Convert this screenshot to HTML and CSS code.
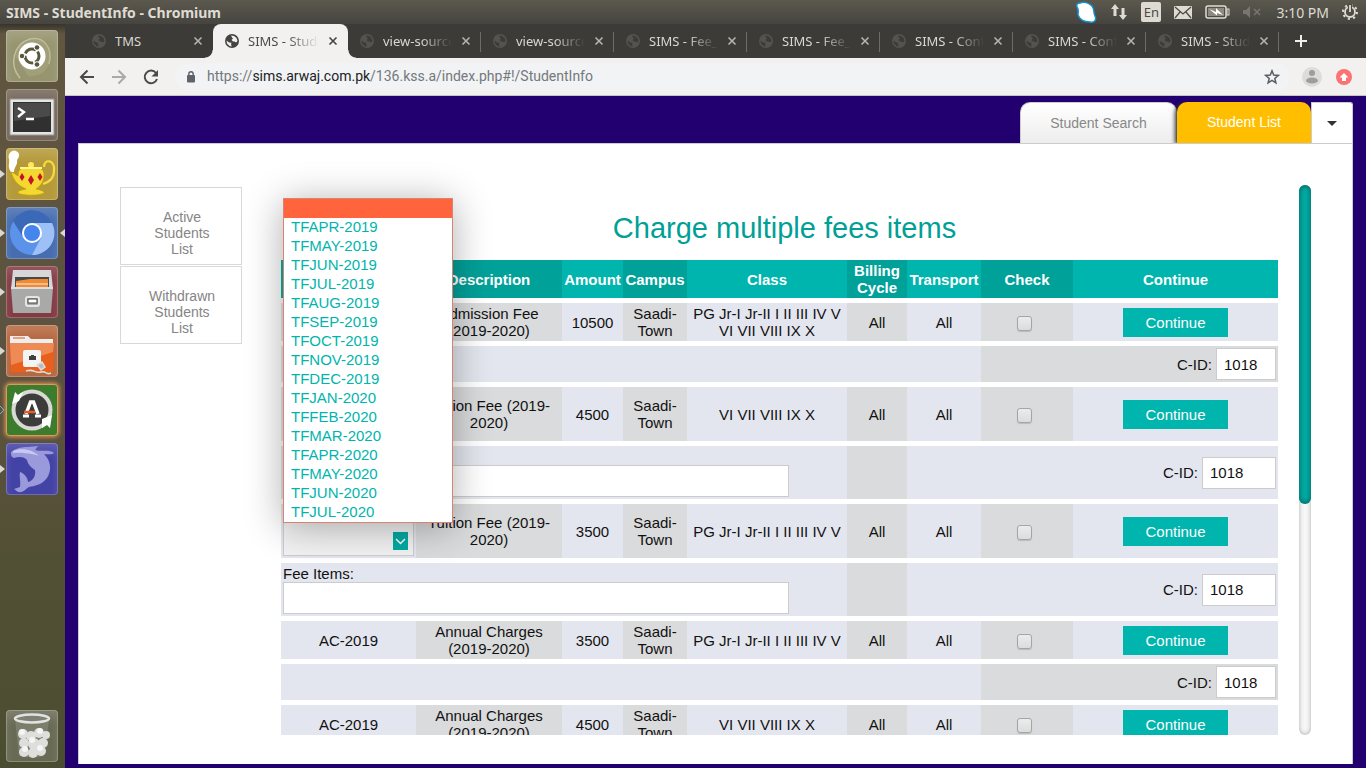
FILE: index.html
```html
<!DOCTYPE html>
<html lang="en">
<head>
<meta charset="utf-8">
<title>SIMS - StudentInfo</title>
<link rel="stylesheet" href="styles.css">
</head>
<body>
<svg width="0" height="0" class="defs" aria-hidden="true">
  <symbol id="globe" viewBox="0 0 14 14"><circle cx="7" cy="7" r="7" fill="currentColor"/><path d="M1.5 6.5 4 8.5 6.500 8.800 6 10.500 6.800 12.500 4.500 12 2 9.500zM6 1.500 9 2 11.500 4 12.500 7 11 8.500 9.500 7.500 8 7.500 6.500 6 8 4.500 7 3.500z" fill="var(--cut)"/></symbol>
  <symbol id="cross" viewBox="0 0 10 10"><path d="M1.500 1.500 8.500 8.500M8.500 1.500 1.500 8.500" stroke="currentColor" stroke-width="1.600" fill="none"/></symbol>
  <symbol id="run" viewBox="0 0 5 8"><path d="M0 0 5 4 0 8z" fill="#d8d8d4"/></symbol>
</svg>

<header class="system-bar">
  <span class="window-title">SIMS - StudentInfo - Chromium</span>
  <div class="indicators">
    <svg width="22" height="23" viewBox="0 0 22 23"><path d="M5 2C9 0 14 2 17 5 20 9 18 11 20 15 22 19 19 22 15 21 10 21 5 19 3 14 3 11 4 9 2 6 1 3 3 2 5 2z" fill="#fff" stroke="#1191cf" stroke-width="1.500"/></svg>
    <svg width="18" height="18" viewBox="0 0 18 18"><path d="M5 1 9 6H6.500V13H3.500V6H1zM13 17 9 12h2.500V5h3v7H17z" fill="#dfdbd2"/></svg>
    <span class="lang">En</span>
    <svg width="18" height="13" viewBox="0 0 18 13"><rect width="18" height="13" rx="1" fill="#dfdbd2"/><path d="M1 1 9 8 17 1M1 12 6 6M17 12 12 6" stroke="#4b4a45" stroke-width="1.300" fill="none"/></svg>
    <svg width="25" height="14" viewBox="0 0 25 14"><rect x="1" y="1" width="20" height="12" rx="2" fill="none" stroke="#dfdbd2" stroke-width="1.500"/><rect x="3" y="3" width="16" height="8" fill="#8d8a82"/><rect x="22" y="4" width="2" height="6" fill="none" stroke="#dfdbd2"/><path d="M4 4 11 7V3L18 10 12 8V10.500z" fill="#fff"/></svg>
    <svg width="18" height="12" viewBox="0 0 18 12"><path d="M0 4h3l4-4v12L3 8H0z" fill="#777670"/><path d="M11 3l6 6M17 3l-6 6" stroke="#777670" stroke-width="1.500"/></svg>
    <span class="clock">3:10 PM</span>
    <svg width="16" height="16" viewBox="0 0 16 16" fill="none" stroke="#dfdbd2"><circle cx="8" cy="8" r="5" stroke-width="1.800"/><circle cx="8" cy="8" r="7" stroke-width="2" stroke-dasharray="2.200 3.298"/><path d="M8 0v8" stroke="#4b4a45" stroke-width="4"/><path d="M8 1v7" stroke-width="1.800"/></svg>
  </div>
</header>

<div class="desktop">
  <nav class="launcher" aria-label="Launcher">
    <button class="app dash" aria-label="Dash"><svg viewBox="0 0 52 52"><path d="M14 48C2 34 8 14 24 9 38 6 47 18 43 34" fill="none" stroke="#c1bf9d" stroke-width="1.500"/><path d="M9 26C12 9 34 2 44 18 48 34 38 48 22 46" fill="#b0ae88" opacity=".4"/><circle cx="26" cy="26" r="13.500" fill="#fff"/><circle cx="26" cy="26" r="7" fill="none" stroke="#5a583c" stroke-width="3" stroke-dasharray="12.600 2.060" stroke-dashoffset="5"/><g fill="#5a583c" stroke="#fff"><circle cx="16" cy="26" r="2.800"/><circle cx="31" cy="17.500" r="2.800"/><circle cx="31" cy="34.500" r="2.800"/></g></svg></button>
    <button class="app term" aria-label="Terminal"><svg viewBox="0 0 52 52"><rect x="4" y="10" width="44" height="36" fill="#e4e4e2" stroke="#999"/><rect x="7" y="13" width="38" height="30" fill="#303030"/><path d="M8 14h36v13L8 32z" fill="#4a4a4a"/><path d="M12 19l6 4-6 5M20 30h8" fill="none" stroke="#fff" stroke-width="2.400"/></svg></button>
    <button class="app lamp" aria-label="Teapot"><svg class="run" viewBox="0 0 5 8"><use href="#run"/></svg><svg viewBox="0 0 52 52"><path d="M5 24C1 18 4 16 3 11 1 5 7 1 10 3 15 5 13 10 11 12 12 17 8 19 8 24z" fill="#fff"/><path d="M38 19C38 10 49 12 48 22 48 31 43 34 37 36" fill="none" stroke="#f6dc3c" stroke-width="2.200"/><path d="M5 24C9 25 10 27 12 28 12 19 18 19 25 19 33 19 38 20 38 27 38 35 33 39 30 41 36 42 39 44 38 45 34 48 16 48 12 45 11 43 15 42 20 41 13 38 8 34 5 24z" fill="#f3d831" stroke="#c59f00" stroke-width=".8"/><circle cx="25" cy="17" r="3" fill="#ffe85a"/><path d="M14 20h22" stroke="#fff58a" stroke-width="2"/><path d="M16 25l2.500 4-2.500 4-2.500-4zM25 27l3 5-3 5-3-5zM34 25l2.500 4-2.500 4-2.500-4z" fill="#c8102a"/></svg></button>
    <button class="app chromium" aria-label="Chromium"><svg class="run" viewBox="0 0 5 8"><use href="#run"/></svg><svg class="focus" viewBox="0 0 5 8"><use href="#run"/></svg><svg viewBox="0 0 52 52"><circle cx="26" cy="26" r="22" fill="#5c93ea"/><path d="M26 16h20A22 22 0 0 1 26 48L35 31z" fill="#9dc0f7"/><path d="M7 14A22 22 0 0 1 46 16H26a10 10 0 0 0-9 14z" fill="#3b69b8"/><circle cx="26" cy="26" r="10" fill="#fff"/><circle cx="26" cy="26" r="8" fill="#4585ee"/></svg></button>
    <button class="app files" aria-label="Files"><svg class="run" viewBox="0 0 5 8"><use href="#run"/></svg><svg viewBox="0 0 52 52"><path d="M7 4h38l2 19H5z" fill="#d7d7d7"/><path d="M9 11h34v12H9z" fill="#484848"/><path d="M10 15l14-2h18v10H10z" fill="#f08a35"/><path d="M10 18h32" stroke="#fff0d9"/><path d="M5 22h42l-2 25H7z" fill="#a9a9a7"/><path d="M5 22h42" stroke="#ddd" stroke-width="2"/><rect x="20" y="31" width="13" height="9" rx="2" fill="#aaa" stroke="#e5e5e5" stroke-width="2"/><rect x="22" y="33" width="9" height="4" fill="#fff" stroke="#444"/></svg></button>
    <button class="app share" aria-label="Network folder"><svg class="run" viewBox="0 0 5 8"><use href="#run"/></svg><svg viewBox="0 0 52 52"><path d="M4 11h18l3 3h22v8H4z" fill="#eee"/><path d="M7 13h12" stroke="#eaa27c" stroke-width="2"/><path d="M4 18h44l-1 29H5z" fill="#e9601d"/><path d="M4 18h44l-1 9L5 40z" fill="#f08a54"/><rect x="17" y="25" width="18" height="17" rx="2" fill="#f4f4f2"/><path d="M23 35v-4h2v-1h3v1h2v4z" fill="#3f423c"/><path d="M31 40l5-3 3 5-4 3zM20 46c8-3 9 3 15 1s4 4 10 1" fill="#bbb" stroke="#ddd" stroke-width="1.500"/></svg></button>
    <button class="app updater" aria-label="Software Updater"><svg class="run" viewBox="0 0 5 8"><path d="M0 0 4 4 0 8" fill="none" stroke="#65b8dc"/></svg><svg viewBox="0 0 52 52"><circle cx="26" cy="26" r="18.500" fill="#3c3c3a" stroke="#d8d8d5" stroke-width="4"/><path d="M6 20 9 8l3 3 5-3-4 9zM46 31l-2 13-3-3-5 3 0-9z" fill="#fff"/><path d="M20 30 24.500 18h3L32 30" fill="none" stroke="#fff" stroke-width="3.500"/><path d="M17 32h6M29 32h6" stroke="#fff" stroke-width="3"/><path d="M18 28h11" stroke="#f05a22" stroke-width="2.500"/></svg></button>
    <button class="app dolphin" aria-label="MySQL Workbench"><svg class="run" viewBox="0 0 5 8"><use href="#run"/></svg><svg viewBox="0 0 52 52"><path d="M5 9C10 5 16 4 22 4L32 3 29 7C36 9 44 6 48 10 46 12 42 11 38 11 45 18 46 27 41 35 36 42 28 43 23 44 19 46 18 50 12 49L8 46 14 44C15 38 13 34 14 29 18 30 22 35 22 39 27 38 30 33 29 27 26 25 22 22 21 17 17 13 12 14 8 15 5 14 5 12 5 9z" fill="#9a99dc"/><path d="M7 8C16 4 27 7 33 13 30 12 20 9 7 10z" fill="#c9c9f2"/></svg></button>
    <button class="app trash" aria-label="Trash"><svg viewBox="0 0 52 52"><path d="M9 10 13 46q13 3 25 0L43 10z" fill="#8d9180" opacity=".5"/><g fill="#dededc"><circle cx="17" cy="24" r="5"/><circle cx="25" cy="26" r="5"/><circle cx="33" cy="23" r="5"/><circle cx="40" cy="25" r="4"/><circle cx="18" cy="33" r="5"/><circle cx="28" cy="34" r="6"/><circle cx="37" cy="33" r="5"/><circle cx="18" cy="42" r="5"/><circle cx="27" cy="43" r="5"/><circle cx="35" cy="41" r="5"/></g><g fill="#f5f5f4"><circle cx="16" cy="22" r="3"/><circle cx="26" cy="30" r="3"/><circle cx="34" cy="21" r="3"/><circle cx="19" cy="39" r="3"/><circle cx="34" cy="38" r="3"/></g><ellipse cx="26" cy="8.500" rx="17" ry="4" fill="#7e8175" stroke="#e2e2e0" stroke-width="2.500"/></svg></button>
  </nav>

  <div class="browser">
    <div class="tab-strip">
      <div class="tab"><svg class="fav"><use href="#globe"/></svg><span>TMS</span><svg class="close"><use href="#cross"/></svg></div>
      <div class="tab active"><svg class="fav"><use href="#globe"/></svg><span>SIMS - StudentInfo</span><svg class="close"><use href="#cross"/></svg></div>
      <div class="tab line"><svg class="fav"><use href="#globe"/></svg><span>view-source:https</span><svg class="close"><use href="#cross"/></svg></div>
      <div class="tab line"><svg class="fav"><use href="#globe"/></svg><span>view-source:https</span><svg class="close"><use href="#cross"/></svg></div>
      <div class="tab line"><svg class="fav"><use href="#globe"/></svg><span>SIMS - Fee_Items</span><svg class="close"><use href="#cross"/></svg></div>
      <div class="tab line"><svg class="fav"><use href="#globe"/></svg><span>SIMS - Fee_Items</span><svg class="close"><use href="#cross"/></svg></div>
      <div class="tab line"><svg class="fav"><use href="#globe"/></svg><span>SIMS - Configure</span><svg class="close"><use href="#cross"/></svg></div>
      <div class="tab line"><svg class="fav"><use href="#globe"/></svg><span>SIMS - Configure</span><svg class="close"><use href="#cross"/></svg></div>
      <div class="tab line"><svg class="fav"><use href="#globe"/></svg><span>SIMS - StudentInfo</span><svg class="close"><use href="#cross"/></svg></div>
      <button class="new-tab" aria-label="New tab"><svg width="12" height="12" viewBox="0 0 12 12"><path d="M6 0v12M0 6h12" stroke="#eeeeea" stroke-width="2"/></svg></button>
    </div>

    <div class="toolbar">
      <button aria-label="Back"><svg width="16" height="16" viewBox="0 0 16 16"><path d="M15 8H2M8.500 1.500 2 8l6.500 6.500" fill="none" stroke="#4a4a4a" stroke-width="2"/></svg></button>
      <button aria-label="Forward"><svg width="16" height="16" viewBox="0 0 16 16"><path d="M1 8h13M7.500 1.500 14 8l-6.500 6.500" fill="none" stroke="#aaa9a7" stroke-width="2"/></svg></button>
      <button aria-label="Reload"><svg width="16" height="16" viewBox="0 0 16 16"><path d="M13 4A6.300 6.300 0 1 0 14 10" fill="none" stroke="#4a4a4a" stroke-width="2"/><path d="M15 1v6.500H8.500z" fill="#4a4a4a"/></svg></button>
      <div class="address">
        <svg width="10" height="12" viewBox="0 0 10 12"><rect x="1" y="4" width="8" height="7.500" rx="1" fill="#5f6368"/><path d="M2.800 5V3a2.200 2.200 0 0 1 4.400 0v2" fill="none" stroke="#5f6368" stroke-width="1.400"/></svg>
        <span class="url">https://<b>sims.arwaj.com.pk</b>/136.kss.a/index.php#!/StudentInfo</span>
        <svg width="16" height="16" viewBox="0 0 16 16"><path d="M8 1.800l1.700 4.200 4.600.4-3.500 3 1.100 4.400L8 11.400l-3.900 2.400 1.100-4.400-3.500-3 4.600-.4z" fill="none" stroke="#5a5e64" stroke-width="1.500"/></svg>
      </div>
      <div class="extras">
        <svg width="20" height="20" viewBox="0 0 20 20"><circle cx="10" cy="10" r="10" fill="#dcdcdc"/><circle cx="10" cy="6" r="3" fill="#9d9d9d"/><ellipse cx="10" cy="13.500" rx="6" ry="3" fill="#9d9d9d"/></svg>
        <svg width="16" height="16" viewBox="0 0 16 16"><circle cx="8" cy="8" r="8" fill="#fb7275"/><path d="M8 4 12.500 8.500H10V12H6V8.500H3.500z" fill="#fff"/></svg>
      </div>
    </div>

    <main class="page">
      <nav class="page-tabs">
        <button class="page-tab search">Student Search</button>
        <button class="page-tab list">Student List</button>
        <button class="page-tab more" aria-label="More"><svg width="10" height="5" viewBox="0 0 10 5"><path d="M0 0h10L5 5z" fill="#333"/></svg></button>
      </nav>
      <section class="panel">
        <aside class="side">
          <a href="#active">Active<br>Students<br>List</a>
          <a href="#withdrawn">Withdrawn<br>Students<br>List</a>
        </aside>
        <div class="viewport">
          <h1>Charge multiple fees items</h1>
          <table class="fees">
            <colgroup><col class="c-item"><col class="c-desc"><col class="c-amount"><col class="c-campus"><col class="c-class"><col class="c-cycle"><col class="c-transport"><col class="c-check"><col class="c-continue"></colgroup>
            <thead><tr><th></th><th>Description</th><th>Amount</th><th>Campus</th><th>Class</th><th>Billing Cycle</th><th>Transport</th><th>Check</th><th>Continue</th></tr></thead>
            <tbody>
              <tr><td></td><td>Admission Fee (2019-2020)</td><td>10500</td><td>Saadi-Town</td><td>PG Jr-I Jr-II I II III IV V VI VII VIII IX X</td><td>All</td><td>All</td><td><input type="checkbox" aria-label="Check admission fee"></td><td><button class="go">Continue</button></td></tr>
              <tr class="sub"><td colspan="7"></td><td colspan="2" class="cid"><label>C-ID: <input type="text" value="1018"></label></td></tr>
              <tr class="pick"><td><select aria-label="Fee item"><option></option></select></td><td>Tuition Fee (2019-2020)</td><td>4500</td><td>Saadi-Town</td><td>VI VII VIII IX X</td><td>All</td><td>All</td><td><input type="checkbox" aria-label="Check tuition fee, senior"></td><td><button class="go">Continue</button></td></tr>
              <tr class="items"><td colspan="5"><label for="items1">Fee Items:</label><input id="items1" type="text"></td><td></td><td colspan="3" class="cid wide"><label>C-ID: <input type="text" value="1018"></label></td></tr>
              <tr class="pick"><td><select aria-label="Fee item"><option></option></select></td><td>Tuition Fee (2019-2020)</td><td>3500</td><td>Saadi-Town</td><td>PG Jr-I Jr-II I II III IV V</td><td>All</td><td>All</td><td><input type="checkbox" aria-label="Check tuition fee, junior"></td><td><button class="go">Continue</button></td></tr>
              <tr class="items"><td colspan="5"><label for="items2">Fee Items:</label><input id="items2" type="text"></td><td></td><td colspan="3" class="cid wide"><label>C-ID: <input type="text" value="1018"></label></td></tr>
              <tr><td>AC-2019</td><td>Annual Charges (2019-2020)</td><td>3500</td><td>Saadi-Town</td><td>PG Jr-I Jr-II I II III IV V</td><td>All</td><td>All</td><td><input type="checkbox" aria-label="Check annual charges, junior"></td><td><button class="go">Continue</button></td></tr>
              <tr class="sub"><td colspan="7"></td><td colspan="2" class="cid"><label>C-ID: <input type="text" value="1018"></label></td></tr>
              <tr><td>AC-2019</td><td>Annual Charges (2019-2020)</td><td>4500</td><td>Saadi-Town</td><td>VI VII VIII IX X</td><td>All</td><td>All</td><td><input type="checkbox" aria-label="Check annual charges, senior"></td><td><button class="go">Continue</button></td></tr>
            </tbody>
          </table>
        </div>
        <div class="scroll-track"><div class="scroll-thumb"></div></div>
        <ul class="options" role="listbox" aria-label="Fee item">
          <li role="option" aria-selected="true"></li>
          <li role="option">TFAPR-2019</li><li role="option">TFMAY-2019</li><li role="option">TFJUN-2019</li><li role="option">TFJUL-2019</li><li role="option">TFAUG-2019</li><li role="option">TFSEP-2019</li><li role="option">TFOCT-2019</li><li role="option">TFNOV-2019</li><li role="option">TFDEC-2019</li><li role="option">TFJAN-2020</li><li role="option">TFFEB-2020</li><li role="option">TFMAR-2020</li><li role="option">TFAPR-2020</li><li role="option">TFMAY-2020</li><li role="option">TFJUN-2020</li><li role="option">TFJUL-2020</li>
        </ul>
      </section>
    </main>
  </div>
</div>
</body>
</html>
```
FILE: styles.css
```css
* { box-sizing: border-box; }
body {
  margin: 0;
  height: 100vh;
  overflow: hidden;
  display: flex;
  flex-direction: column;
  font-family: "Liberation Sans", Arial, sans-serif;
  font-size: 15px;
  line-height: 17px;
  color: #111;
}
button { font: inherit; border: 0; padding: 0; margin: 0; background: none; }
svg { display: block; flex: none; }
.defs { position: absolute; }

/* system bar */
.system-bar {
  flex: none;
  height: 24px;
  padding: 0 8px 0 6px;
  display: flex;
  align-items: center;
  justify-content: space-between;
  background: linear-gradient(#5b594e, #45443f);
  color: #dfdbd2;
  font-family: "Noto Sans", "Open Sans", sans-serif;
  font-size: 14px;
}
.window-title { font-weight: 700; }
.indicators { display: flex; align-items: center; gap: 13px; }
.lang {
  width: 20px;
  height: 20px;
  border-radius: 2px;
  background: #dfdbd2;
  color: #4b4a45;
  text-align: center;
  font-size: 13px;
  line-height: 20px;
}
.clock { margin-left: 2px; }

.desktop { flex: 1; min-height: 0; display: flex; }

/* launcher */
.launcher {
  flex: none;
  width: 65px;
  padding: 6px 7px 6px 6px;
  display: flex;
  flex-direction: column;
  gap: 7px;
  background: linear-gradient(#38342b 0, #61563f 10px, #5b5340 45%, #58513a 60%, #525034 72%, #4b4d31);
}
.app {
  position: relative;
  flex: none;
  width: 52px;
  height: 52px;
  border-radius: 4px;
  box-shadow: inset 0 0 0 1px rgba(255, 255, 255, .22), inset 0 8px 10px rgba(255, 255, 255, .14);
}
.app > svg { width: 52px; height: 52px; }
.app > .run { position: absolute; left: -6px; top: 22px; width: 5px; height: 8px; }
.app > .focus { position: absolute; right: -7px; top: 22px; width: 5px; height: 8px; transform: scaleX(-1); }
.dash { background: #979470; }
.term { background: #74675a; }
.lamp { background: #b59a3b; }
.chromium { background: #476daf; }
.files { background: #843a43; }
.share { background: #b66840; }
.updater { background: #3c7c2d; box-shadow: 0 0 4px 1px #ee9850, inset 0 0 0 1px #d69a62; }
.dolphin { background: #4342a5; }
.trash { background: #686a54; margin-top: auto; }

/* browser chrome */
.browser {
  flex: 1;
  min-width: 0;
  display: flex;
  flex-direction: column;
  font-size: 15px;
}
.tab-strip {
  flex: none;
  height: 34px;
  padding: 0 14px 0 15px;
  display: flex;
  background: #3c3b37;
  color: #d9d8d0;
  font-family: "Noto Sans", "Open Sans", sans-serif;
  font-size: 13px;
}
.tab {
  --cut: #3c3b37;
  flex: 0 1 133px;
  min-width: 0;
  padding: 0 10px 0 12px;
  display: flex;
  align-items: center;
  position: relative;
}
.tab span {
  flex: 1;
  min-width: 0;
  margin: 0 9px;
  overflow: hidden;
  white-space: nowrap;
  mask-image: linear-gradient(to right, #000 55%, transparent);
}
.tab:first-child span { mask-image: none; }
.fav { width: 14px; height: 14px; color: #53534f; }
.close { width: 10px; height: 10px; color: #b5b4ad; }
.tab.active {
  --cut: #f2f1f0;
  flex-basis: 135px;
  background: #f2f1f0;
  color: #4a4a4a;
  border-radius: 8px 8px 0 0;
}
.active .fav, .active .close { color: #434343; }
.active::before, .active::after {
  content: "";
  position: absolute;
  bottom: 0;
  width: 8px;
  height: 8px;
}
.active::before { right: 100%; background: radial-gradient(circle at 0 0, #3c3b37 7px, #f2f1f0 8px); }
.active::after { left: 100%; background: radial-gradient(circle at 100% 0, #3c3b37 7px, #f2f1f0 8px); }
.tab.line::after {
  content: "";
  position: absolute;
  right: 0;
  top: 8px;
  width: 1px;
  height: 20px;
  background: #6d6c68;
}
.new-tab { padding: 0 16px; }

.toolbar {
  flex: none;
  height: 38px;
  padding: 0 14px;
  display: flex;
  align-items: center;
  gap: 16px;
  background: #f2f1f0;
  border-bottom: 1px solid #c6c5c4;
}
.address {
  flex: 1;
  min-width: 0;
  height: 28px;
  margin-right: -4px;
  padding: 0 10px 0 11px;
  border-radius: 14px;
  display: flex;
  align-items: center;
  gap: 11px;
  background: #f1f3f4;
}
.extras { display: flex; align-items: center; gap: 14px; }
.url {
  flex: 1;
  color: #74787c;
  font-family: Roboto, "Noto Sans", sans-serif;
  font-size: 14px;
  white-space: nowrap;
}
.url b { font-weight: 400; color: #202124; }

/* page */
.page {
  flex: 1;
  min-height: 0;
  padding: 6px 13px 4px;
  display: flex;
  flex-direction: column;
  background: #220070;
}
.page-tabs { flex: none; height: 41px; display: flex; justify-content: flex-end; }
.page-tab { font-size: 14px; line-height: 16px; }
.search {
  width: 157px;
  border-radius: 10px 10px 0 0;
  border: 1px solid #ccc;
  border-bottom: 0;
  background: linear-gradient(#fff, #ededed);
  color: #888;
}
.list {
  width: 134px;
  padding-bottom: 2px;
  border-radius: 10px 10px 0 0;
  background: #ffbf00;
  color: #fff;
  box-shadow: -2px 1px 4px #333;
  clip-path: inset(0 0 0 -8px);
}
.more {
  width: 42px;
  display: grid;
  place-items: center;
  border: 1px solid #ccc;
  border-bottom: 0;
  border-radius: 0 3px 0 0;
  background: #fff;
}
.panel {
  position: relative;
  flex: 1;
  min-height: 0;
  padding: 41px 41px 29px;
  display: flex;
  background: #fff;
  border: 1px solid #ccc;
  border-bottom: 0;
}
.side {
  flex: none;
  width: 122px;
  margin: 2px 39px 0 0;
  display: flex;
  flex-direction: column;
  gap: 1px;
}
.side a {
  height: 78px;
  padding: 21px 0 0 2px;
  border: 1px solid #d8d8d8;
  color: #858585;
  font-size: 14px;
  line-height: 16px;
  text-align: center;
  text-decoration: none;
}
.viewport { flex: 1; min-width: 0; overflow: hidden; padding-right: 10px; }
.viewport h1 {
  margin: 26px -10px 9px 0;
  color: #00a096;
  font-size: 29px;
  line-height: 35px;
  font-weight: 400;
  text-align: center;
}
.scroll-track {
  flex: none;
  width: 12px;
  margin-left: 11px;
  border-radius: 6px;
  background: #f7f7f7;
  box-shadow: inset 0 0 5px rgba(0, 0, 0, .3);
}
.scroll-thumb {
  height: 58%;
  border-radius: 6px;
  background: #00aea6;
  box-shadow: inset 0 0 6px rgba(0, 0, 0, .5);
}

/* fees table */
.fees {
  width: 100%;
  table-layout: fixed;
  border-collapse: separate;
  border-spacing: 0 5px;
}
.c-item { width: 135px; }
.c-desc { width: 146px; }
.c-amount { width: 61px; }
.c-campus { width: 64px; }
.c-class { width: 160px; }
.c-cycle { width: 60px; }
.c-transport { width: 74px; }
.c-check { width: 92px; }
.c-continue { width: 205px; }
.fees th, .fees td { padding: 2px; text-align: center; vertical-align: middle; }
.fees th { background: #00b5ad; color: #fff; font-weight: 700; }
.fees th:nth-child(even) { background: #00a199; }
.fees td { background: #e3e6ee; }
.fees td:nth-child(even) { background: #dadbdc; }
.fees tr { height: 38px; }
.fees .sub { height: 36px; }
.fees .cid { text-align: right; }
.fees input[type="text"] {
  height: 32px;
  padding: 0 7px;
  border: 1px solid #ccc;
  border-radius: 0;
  background: #fff;
  color: #111;
  font: inherit;
}
.cid label { display: flex; align-items: center; justify-content: flex-end; gap: 4px; }
.cid input { width: 60px; }
.cid.wide input { width: 74px; }
.items td:first-child { text-align: left; }
.items td:first-child label { display: block; }
.items td:first-child input { display: block; width: 90%; }
.fees select {
  display: block;
  width: 100%;
  height: 50px;
  appearance: none;
  border: 1px solid #ccc;
  border-radius: 0;
  background:
    url("data:image/svg+xml,%3Csvg xmlns='http://www.w3.org/2000/svg' width='15' height='18'%3E%3Crect width='15' height='18' fill='%2300aaa2'/%3E%3Cpath d='M3 7l4.500 4.500L12 7' fill='none' stroke='white' stroke-width='1.500'/%3E%3C/svg%3E") right 5px top 25px no-repeat,
    #f2f2f2;
}
.fees input[type="checkbox"] {
  appearance: none;
  display: inline-block;
  width: 15px;
  height: 15px;
  margin: 0 6px 0 0;
  vertical-align: middle;
  border: 1px solid #a5a5a5;
  border-radius: 3px;
  background: linear-gradient(#ececec, #dcdcdc);
  box-shadow: 0 1px 1px rgba(0, 0, 0, .15);
}
.go { width: 105px; height: 29px; background: #00b5ad; color: #fff; vertical-align: middle; }

/* open drop-down */
.options {
  position: absolute;
  left: 204px;
  top: 54px;
  width: 170px;
  margin: 0;
  padding: 0;
  list-style: none;
  background: #fff;
  border: 1px solid #d98270;
  color: #00b5ad;
  box-shadow: 0 4px 36px rgba(0, 0, 0, .32);
}
.options li { height: 19px; padding-left: 7px; line-height: 17px; }
.options li[aria-selected="true"] { background: #ff643c; }
```
